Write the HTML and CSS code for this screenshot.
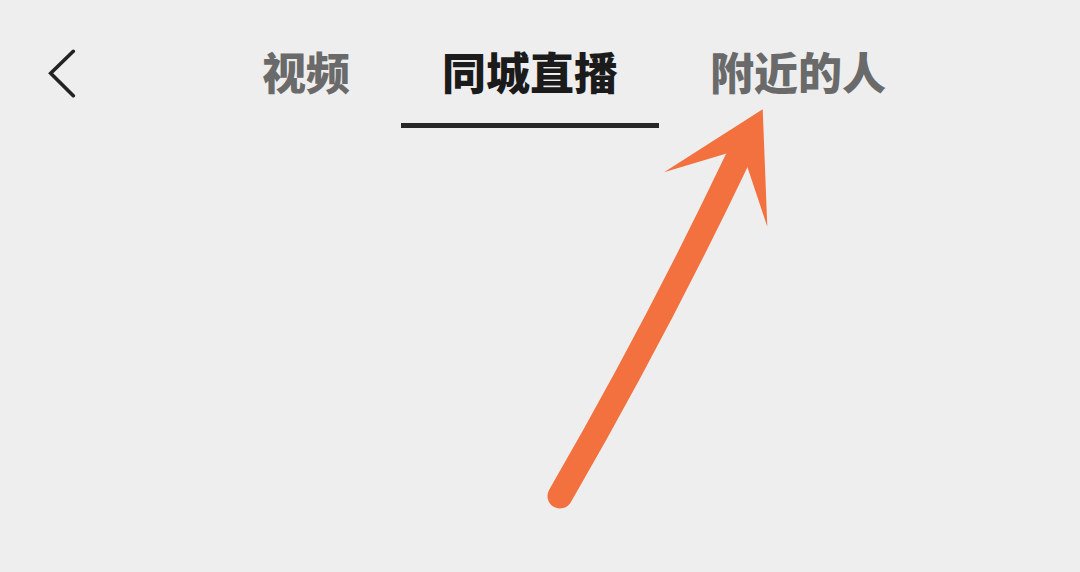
FILE: index.html
```html
<!DOCTYPE html>
<html lang="zh-CN">
<head>
<meta charset="utf-8">
<title>同城直播</title>
<link rel="stylesheet" href="styles.css">
</head>
<body>
<div class="screen">
  <header class="nav">
    <button class="back" aria-label="返回">
      <svg width="30" height="50" viewBox="0 0 30 50">
        <polyline points="25.3,2.3 2.7,24.3 25.3,46.7" fill="none" stroke="#222" stroke-width="3.6" stroke-linecap="round" stroke-linejoin="miter"/>
      </svg>
    </button>
    <nav class="tabs">
      <div class="tab"><span class="label">视频</span></div>
      <div class="tab active"><span class="label">同城直播</span><span class="indicator"></span></div>
      <div class="tab"><span class="label">附近的人</span></div>
    </nav>
  </header>
  <svg class="annotation" width="1080" height="572" viewBox="0 0 1080 572">
    <path d="M560,496 Q656,330 737,160" fill="none" stroke="#f3703f" stroke-width="25" stroke-linecap="round"/>
    <polygon points="762.7,109.3 664,172.3 727.3,153.3 746.7,165 767.3,226.7" fill="#f3703f"/>
  </svg>
</div>
</body>
</html>
```

FILE: styles.css
```css
html, body {
  margin: 0;
  padding: 0;
  background: #eeeeee;
}
.screen {
  position: relative;
  width: 1080px;
  height: 572px;
  overflow: hidden;
  background: #eeeeee;
  font-family: "Noto Sans CJK SC", "Noto Sans", sans-serif;
}
.nav {
  display: flex;
  align-items: flex-start;
  padding-top: 49px;
  padding-left: 48px;
}
.back {
  width: 30px;
  height: 50px;
  padding: 0;
  margin: 0;
  border: 0;
  background: none;
  display: block;
}
.back svg {
  display: block;
}
.tabs {
  display: flex;
  gap: 10px;
  margin-left: 143px;
}
.tab {
  display: flex;
  flex-direction: column;
  align-items: center;
  padding: 0 41px;
}
.label {
  font-size: 44px;
  line-height: 44px;
  font-weight: 900;
  color: #6a6a6a;
  letter-spacing: 0;
  white-space: nowrap;
}
.tab.active .label {
  color: #1b1b1b;
}
.indicator {
  display: block;
  align-self: stretch;
  height: 5px;
  margin: 30px -41px 0;
  background: #262626;
}
.annotation {
  position: absolute;
  left: 0;
  top: 0;
  pointer-events: none;
}
```
